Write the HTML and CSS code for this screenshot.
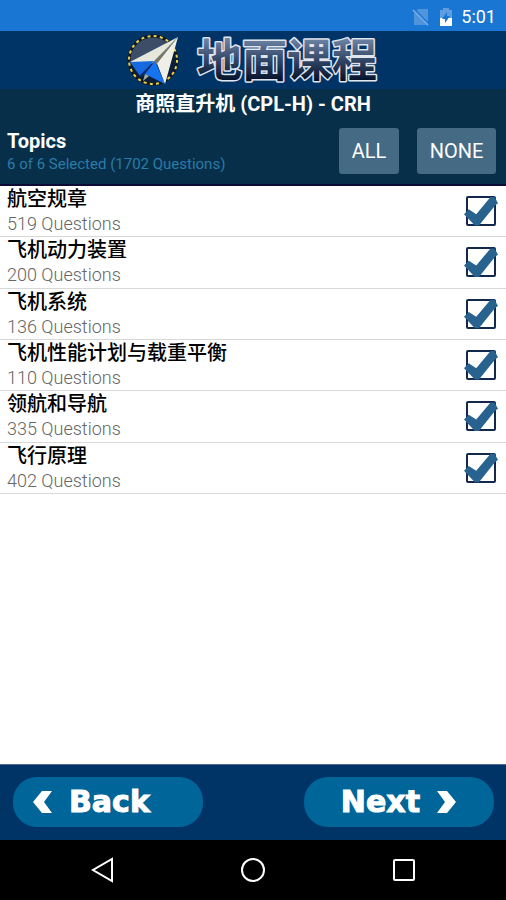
FILE: index.html
```html
<!DOCTYPE html>
<html lang="zh-CN">
<head>
<meta charset="utf-8">
<meta name="viewport" content="width=device-width, initial-scale=1">
<title>地面课程</title>
<link rel="stylesheet" href="styles.css">
</head>
<body>
<div class="status">
  <svg class="status-icon" viewBox="0 0 18 18" aria-hidden="true"><path d="M6 1h10v16H2V5z" fill="#5094dc"/><path d="M0 0l18 18" stroke="#1976d2" stroke-width="3"/><path d="M1 2l15 15" stroke="#7fb2e8" stroke-width="1.5"/></svg>
  <svg class="battery" viewBox="0 0 14 20" aria-hidden="true"><path d="M4 1h6v2h3v16H1V3h3z" fill="#5d9de0"/><path d="M1 11h12v8H1z" fill="#fff"/><path d="M8 5l-5 7h3v4l5-7H8z" fill="#1976d2"/></svg>
  <span class="clock">5:01</span>
</div>
<header class="brand">
  <svg class="logo" viewBox="0 0 54 54" aria-hidden="true">
    <circle cx="26" cy="27" r="24" fill="#0b1f3c"/>
    <path d="M3 30A24 24 0 0 1 43 10z" fill="#3c4d68"/>
    <circle cx="26" cy="27" r="24" fill="none" stroke="#111a24" stroke-width="3"/>
    <circle cx="26" cy="27" r="24" fill="none" stroke="#e8d44a" stroke-width="2" stroke-dasharray="3 3.28"/>
    <path d="M51 4L3 29l12 3 12-2z" fill="#e6e8dd"/>
    <path d="M51 4L29 28l9 23z" fill="#eef0e8"/>
    <path d="M51 4L25 30l4 2z" fill="#77786c"/>
    <path d="M3 29l24-1-14 15z" fill="#1769e0"/>
    <path d="M27 29L12 43l6-1z" fill="#0a2d6c"/>
    <path d="M28 28l10 23-20-10z" fill="#1673ee"/>
    <path d="M18 41l-2 7 6-5z" fill="#a9aba0"/>
  </svg>
  <svg class="wordmark" viewBox="0 0 184 58" role="img" aria-label="地面课程">
    <defs><linearGradient id="steel" x1="0" y1="0" x2="0" y2="1"><stop offset="0.2" stop-color="#7187a8"/><stop offset="0.55" stop-color="#304464"/><stop offset="0.85" stop-color="#06122a"/></linearGradient></defs>
    <text x="2" y="46">地面课程</text>
  </svg>
</header>
<h1 class="course">商照直升机 (CPL-H) - CRH</h1>
<section class="toolbar">
  <div class="summary">
    <h2>Topics</h2>
    <p>6 of 6 Selected (1702 Questions)</p>
  </div>
  <button class="pick" type="button">ALL</button>
  <button class="pick pick-none" type="button">NONE</button>
</section>
<main>
  <ul class="topics">
    <li><label for="t1"><span class="name">航空规章</span><span class="count">519 Questions</span></label><input id="t1" type="checkbox" checked></li>
    <li><label for="t2"><span class="name">飞机动力装置</span><span class="count">200 Questions</span></label><input id="t2" type="checkbox" checked></li>
    <li><label for="t3"><span class="name">飞机系统</span><span class="count">136 Questions</span></label><input id="t3" type="checkbox" checked></li>
    <li><label for="t4"><span class="name">飞机性能计划与载重平衡</span><span class="count">110 Questions</span></label><input id="t4" type="checkbox" checked></li>
    <li><label for="t5"><span class="name">领航和导航</span><span class="count">335 Questions</span></label><input id="t5" type="checkbox" checked></li>
    <li><label for="t6"><span class="name">飞行原理</span><span class="count">402 Questions</span></label><input id="t6" type="checkbox" checked></li>
  </ul>
</main>
<footer class="pager">
  <button class="step back" type="button"><svg viewBox="0 0 20 22" aria-hidden="true"><path d="M9 0h10l-8 11 8 11H9L0 11z" fill="#fff"/></svg>Back</button>
  <button class="step next" type="button">Next<svg viewBox="0 0 20 22" aria-hidden="true"><path d="M11 0H1l8 11-8 11h10l9-11z" fill="#fff"/></svg></button>
</footer>
<nav class="system">
  <button type="button" aria-label="Back"><svg viewBox="0 0 26 26"><path d="M23 2v22L4 13z"/></svg></button>
  <button type="button" aria-label="Home"><svg viewBox="0 0 26 26"><circle cx="13" cy="13" r="11"/></svg></button>
  <button type="button" aria-label="Recent apps"><svg viewBox="0 0 26 26"><rect x="3" y="3" width="20" height="20" rx="1"/></svg></button>
</nav>
</body>
</html>
```
FILE: styles.css
```css
* { box-sizing: border-box; }
body {
  margin: 0;
  min-height: 100vh;
  display: flex;
  flex-direction: column;
  background: #fff;
  font-family: Roboto, "Noto Sans CJK SC", sans-serif;
}
h1, h2, p, ul { margin: 0; padding: 0; }
button { border: 0; font-family: inherit; color: #fff; padding: 0; }
svg { display: block; }
.status {
  height: 31px;
  padding: 2px 10px 0 0;
  display: flex;
  align-items: center;
  justify-content: flex-end;
  background: #1976d2;
  color: #fff;
}
.status-icon { width: 18px; height: 18px; }
.battery { width: 14px; height: 20px; margin: 0 8px 0 9px; }
.clock { font-size: 18px; line-height: 24px; }
.brand {
  height: 58px;
  display: flex;
  align-items: center;
  justify-content: center;
  gap: 14px;
  background: #003366;
}
.logo { width: 54px; height: 54px; }
.wordmark { width: 184px; height: 58px; overflow: visible; }
.wordmark text {
  font-family: "Noto Sans CJK SC", sans-serif;
  font-size: 45px;
  font-weight: 700;
  fill: url(#steel);
  stroke: #e0e5ee;
  stroke-width: 3px;
  stroke-linejoin: round;
  paint-order: stroke;
}
.course {
  background: #082f49;
  color: #fff;
  font-size: 20px;
  font-weight: 700;
  line-height: 30px;
  text-align: center;
}
.toolbar {
  height: 67px;
  padding: 0 10px 2px 7px;
  display: flex;
  align-items: center;
  gap: 18px;
  background: #082f49;
  border-bottom: 2px solid #0b0b35;
}
.summary { flex: 1; }
.summary h2 { color: #fff; font-size: 20px; line-height: 26px; }
.summary p { color: #2a7ba8; font-size: 15px; line-height: 20px; }
.pick {
  width: 60px;
  height: 46px;
  border-radius: 3px;
  background: #446a84;
  font-size: 20px;
}
.pick-none { width: 79px; }
main { flex: 1; }
.topics {
  min-height: 308px;
  display: grid;
  grid-auto-rows: 1fr;
  list-style: none;
}
.topics li {
  padding: 0 10px 0 7px;
  display: flex;
  align-items: center;
  border-bottom: 1px solid #d8d8d8;
}
.topics label { flex: 1; }
.name, .count { display: block; }
.name { color: #000; font-size: 20px; font-weight: 500; line-height: 26px; }
.count { color: #666; font-size: 18px; font-weight: 300; line-height: 24px; }
.topics input {
  appearance: none;
  position: relative;
  margin: 0;
  width: 30px;
  height: 30px;
  border: 2px solid #12284c;
  border-radius: 2px;
  background: #fff;
}
.topics input:checked::after {
  content: "";
  position: absolute;
  inset: -2px -4px;
  background: #28628f;
  clip-path: polygon(0 60%, 14% 44%, 36% 60%, 78% 3%, 90% 3%, 100% 24%, 92% 30%, 44% 98%, 32% 98%);
}
.pager {
  height: 76px;
  padding: 0 12px 2px 13px;
  display: flex;
  align-items: center;
  justify-content: space-between;
  background: #003366;
  border-top: 1px solid #53658a;
}
.step {
  width: 190px;
  height: 50px;
  display: flex;
  align-items: center;
  border-radius: 24px;
  background: #006699;
  font-family: "DejaVu Sans", sans-serif;
  font-size: 30px;
  font-weight: 700;
  line-height: 40px;
  -webkit-text-stroke: 1px #fff;
}
.step svg { width: 20px; height: 22px; }
.back { gap: 16px; padding-left: 20px; }
.next { gap: 16px; justify-content: flex-end; padding-right: 38px; }
.system {
  height: 60px;
  padding: 0 26px;
  display: flex;
  align-items: center;
  justify-content: space-around;
  background: #000;
}
.system button { background: none; }
.system svg { width: 26px; height: 26px; fill: none; stroke: #fff; stroke-width: 2; }
```
